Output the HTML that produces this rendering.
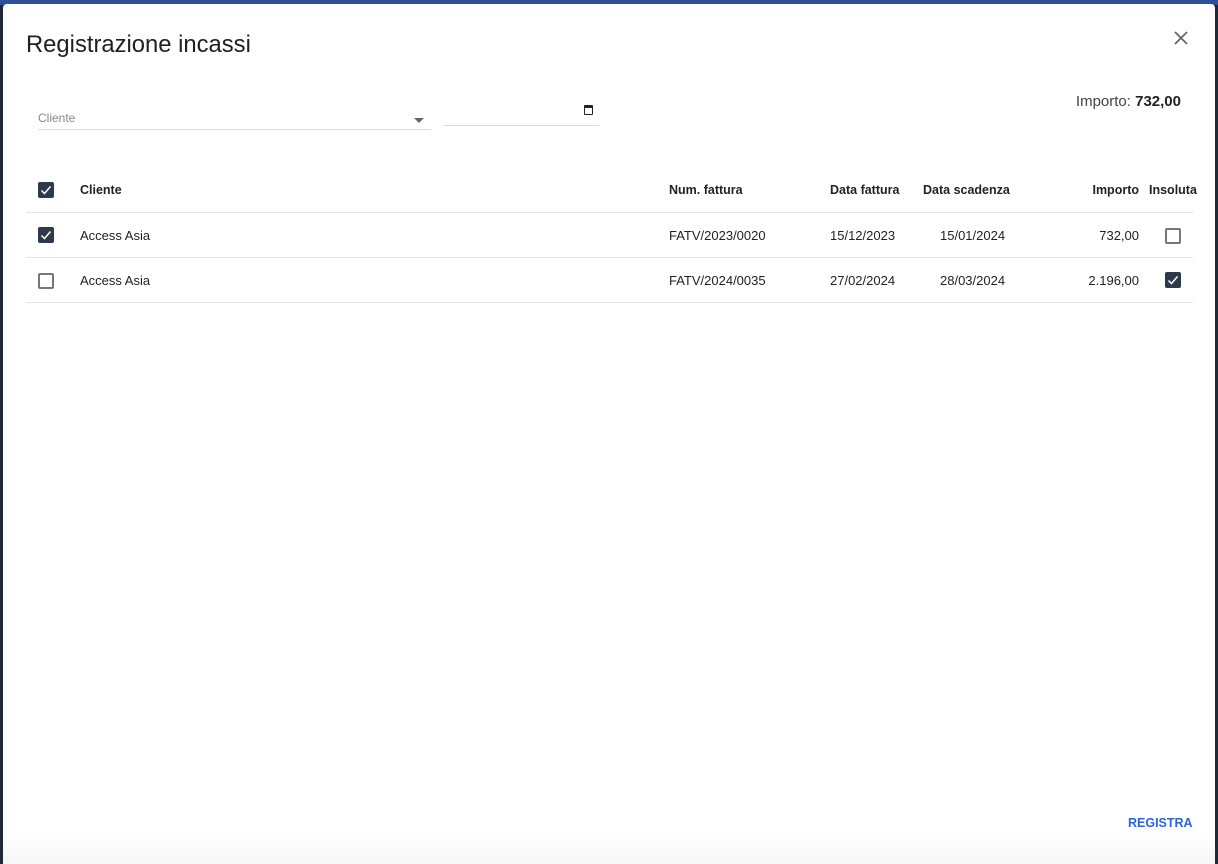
<!DOCTYPE html>
<html><head><meta charset="utf-8"><style>
*{box-sizing:border-box;margin:0;padding:0}
body{width:1218px;height:864px;overflow:hidden;background:#1f2a36;font-family:"Liberation Sans",sans-serif;position:relative}
.top{position:absolute;left:0;top:0;width:1218px;height:5px;background:#2f4f96}
.dlg{position:absolute;left:3px;top:4px;width:1212px;height:860px;background:#fff;border-radius:4px 4px 0 0;background:linear-gradient(#fff 830px,#f6f6f6)}
.t{position:absolute;left:23px;top:27px;font-size:23.8px;color:#212121}
.x{position:absolute;left:1170px;top:26px}
.imp{position:absolute;right:34px;top:89px;font-size:15px;color:#444}
.imp b{color:#222}
.sel{position:absolute;left:35px;top:107px;width:393px;border-bottom:1px solid #ddd;height:19px;font-size:12px;color:#888}
.arr{position:absolute;right:7px;top:7px;border-left:5px solid transparent;border-right:5px solid transparent;border-top:5px solid #666}
.dt{position:absolute;left:440px;top:98px;width:156px;height:24px;border-bottom:1px solid #ddd}
.cal{position:absolute;right:6px;top:3px;width:9px;height:10px;border:1.5px solid #222;border-top-width:3px;border-radius:1px}
.row{position:absolute;left:23px;width:1167px;height:45px;border-bottom:1px solid #e3e3e3;font-size:13px;color:#222}
.row span{position:absolute;top:15px;white-space:nowrap}
.h span{font-weight:bold;font-size:12.5px}
.cb{position:absolute;width:16px;height:16px;border-radius:2px}
.on{background:#2c3a4b}
.off{border:2px solid #777}
.cb svg{position:absolute;left:2px;top:2px}
.reg{position:absolute;left:1125px;top:812px;font-size:12.5px;font-weight:bold;color:#2f64d8}
</style></head><body>
<div class="top"></div>
<div class="dlg">
<div class="t">Registrazione incassi</div>
<svg class="x" width="16" height="16" viewBox="0 0 16 16"><path d="M2 2L14 14M14 2L2 14" stroke="#666" stroke-width="1.8"/></svg>
<div class="imp">Importo: <b>732,00</b></div>
<div class="sel">Cliente<div class="arr"></div></div>
<div class="dt"><div class="cal"></div></div>

<div class="row h" style="top:164px">
<div class="cb on" style="left:12px;top:14px"><svg width="12" height="12" viewBox="0 0 12 12"><path d="M1.5 6.5L4.5 9.5L10.5 2.5" stroke="#fff" stroke-width="1.5" fill="none"/></svg></div>
<span style="left:54px">Cliente</span>
<span style="left:643px">Num. fattura</span>
<span style="left:804px">Data fattura</span>
<span style="left:897px">Data scadenza</span>
<span style="right:54px">Importo</span>
<span style="left:1123px">Insoluta</span>
</div>
<div class="row" style="top:209px">
<div class="cb on" style="left:12px;top:14px"><svg width="12" height="12" viewBox="0 0 12 12"><path d="M1.5 6.5L4.5 9.5L10.5 2.5" stroke="#fff" stroke-width="1.5" fill="none"/></svg></div>
<span style="left:54px">Access Asia</span>
<span style="left:643px">FATV/2023/0020</span>
<span style="left:804px">15/12/2023</span>
<span style="left:914px">15/01/2024</span>
<span style="right:54px">732,00</span>
<div class="cb off" style="left:1139px;top:15px"></div>
</div>
<div class="row" style="top:254px">
<div class="cb off" style="left:12px;top:15px"></div>
<span style="left:54px">Access Asia</span>
<span style="left:643px">FATV/2024/0035</span>
<span style="left:804px">27/02/2024</span>
<span style="left:914px">28/03/2024</span>
<span style="right:54px">2.196,00</span>
<div class="cb on" style="left:1139px;top:14px"><svg width="12" height="12" viewBox="0 0 12 12"><path d="M1.5 6.5L4.5 9.5L10.5 2.5" stroke="#fff" stroke-width="1.5" fill="none"/></svg></div>
</div>
<div class="reg">REGISTRA</div>
</div>
</body></html>
